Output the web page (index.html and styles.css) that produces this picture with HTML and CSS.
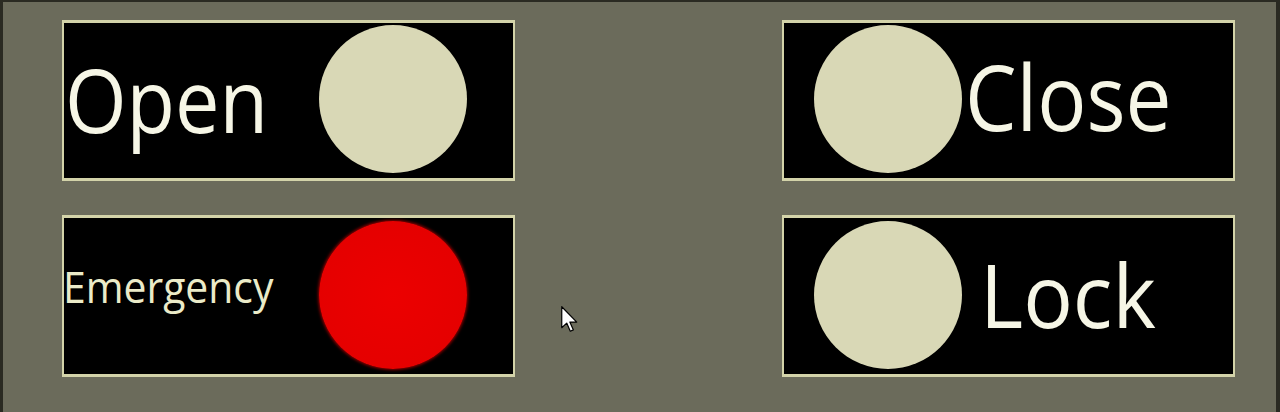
FILE: index.html
```html
<!DOCTYPE html>
<html>
<head>
<meta charset="utf-8">
<title>Panel</title>
<link rel="stylesheet" href="styles.css">
</head>
<body>
<div class="screen">
  <div class="grid">
    <div class="btn btn-open">
      <span class="label label-open">Open</span>
      <span class="lamp lamp-open"></span>
    </div>
    <div class="btn btn-close">
      <span class="lamp lamp-close"></span>
      <span class="label label-close">Close</span>
    </div>
    <div class="btn btn-emg">
      <span class="label label-emg">Emergency</span>
      <span class="lamp lamp-red"></span>
    </div>
    <div class="btn btn-lock">
      <span class="lamp lamp-lock"></span>
      <span class="label label-lock">Lock</span>
    </div>
  </div>
  <svg class="cursor" width="18" height="27" viewBox="0 0 12 18">
    <path d="M0.5 0.5 L0.5 14.5 L3.8 11.4 L6.2 16.8 L8.2 15.9 L5.9 10.7 L10.5 10.7 Z" fill="#ffffff" stroke="#000000" stroke-width="0.8" stroke-linejoin="round"/>
  </svg>
</div>
</body>
</html>
```
FILE: styles.css
```css
html, body {
  margin: 0;
  padding: 0;
}
body {
  background: #6b6b5b;
  font-family: "Open Sans", "Noto Sans", sans-serif;
}
.screen {
  position: relative;
  width: 1280px;
  height: 412px;
  box-sizing: border-box;
  border-top: 2px solid #2a2a22;
  border-left: 3px solid #2a2a22;
  border-right: 4px solid #2a2a22;
  background: #6b6b5b;
  padding: 18px 0 0 59px;
  overflow: hidden;
}
.grid {
  display: grid;
  grid-template-columns: 453px 453px;
  grid-template-rows: 161px 162px;
  column-gap: 267px;
  row-gap: 34px;
}
.btn {
  display: flex;
  align-items: center;
  background: #000000;
  border-style: solid;
  border-color: #d3d3a9;
  border-width: 3px 2px 3px 2px;
  box-sizing: border-box;
  overflow: hidden;
}
.lamp {
  flex: none;
  width: 148px;
  height: 148px;
  border-radius: 50%;
  background: #d9d8b6;
  margin-top: -3px;
}
.lamp-open,
.lamp-red {
  margin-left: auto;
  margin-right: 46px;
}
.lamp-close,
.lamp-lock {
  margin-left: 30px;
}
.lamp-red {
  background: radial-gradient(circle, #ec0000 0%, #e40000 80%, #c80000 100%);
  box-shadow: 0 0 3px 1px rgba(190, 0, 0, 0.75);
}
.label {
  display: block;
  line-height: 1;
  white-space: nowrap;
  color: #f6f6e6;
  transform-origin: left center;
}
.label-open {
  font-size: 88px;
  transform: scaleX(0.9);
  margin-left: 1px;
  margin-top: -4px;
}
.label-close {
  font-size: 91px;
  transform: scaleX(0.9);
  margin-left: 3px;
  margin-top: -8px;
}
.label-lock {
  font-size: 87px;
  transform: scaleX(0.95);
  margin-left: 18px;
  margin-top: -4px;
}
.label-emg {
  font-size: 43px;
  color: #ebebc8;
  transform: scaleX(0.95);
  margin-left: -1px;
  margin-top: -20px;
}
.cursor {
  position: absolute;
  left: 558px;
  top: 304px;
}
```
